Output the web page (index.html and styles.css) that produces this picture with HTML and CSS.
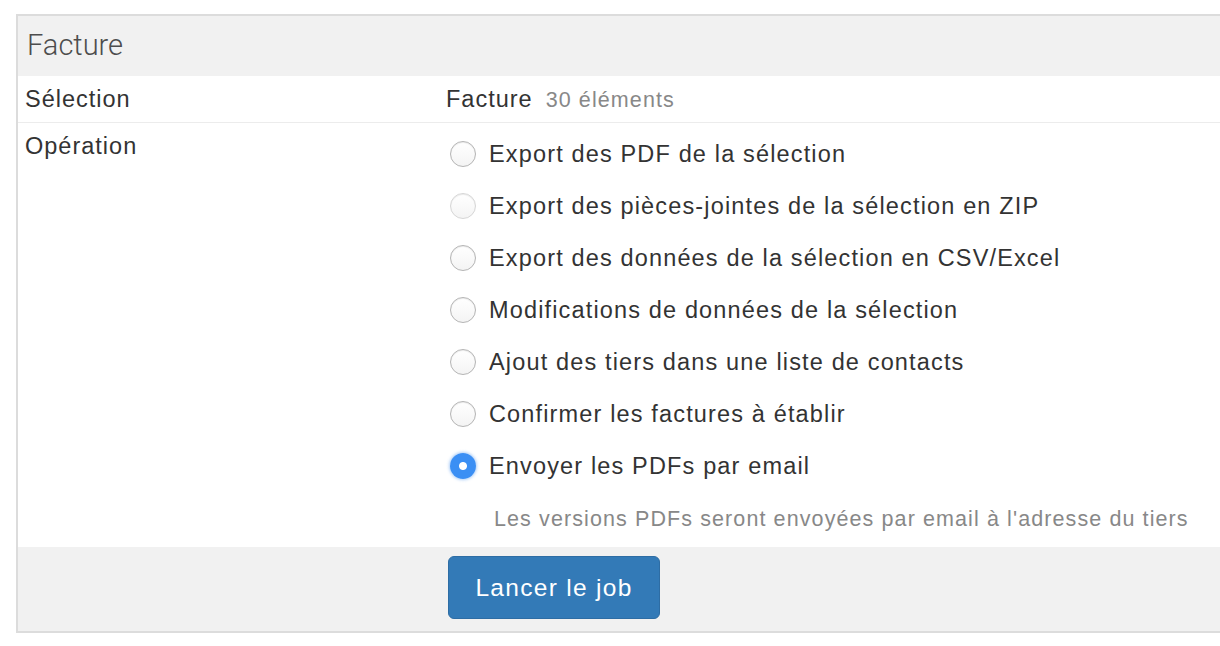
FILE: index.html
```html
<!DOCTYPE html>
<html lang="fr">
<head>
<meta charset="utf-8">
<link rel="stylesheet" href="styles.css">
</head>
<body>
<div class="panel">
  <div class="panel-heading">Facture</div>
  <div class="row row-sel">
    <div class="label">Sélection</div>
    <div class="value"><span class="entity">Facture</span><span class="count">30 éléments</span></div>
  </div>
  <div class="row row-op">
    <div class="label">Opération</div>
    <div class="value">
      <ul class="options">
        <li><span class="radio"></span>Export des PDF de la sélection</li>
        <li><span class="radio faint"></span>Export des pièces-jointes de la sélection en ZIP</li>
        <li><span class="radio"></span>Export des données de la sélection en CSV/Excel</li>
        <li><span class="radio"></span>Modifications de données de la sélection</li>
        <li><span class="radio"></span>Ajout des tiers dans une liste de contacts</li>
        <li><span class="radio"></span>Confirmer les factures à établir</li>
        <li><span class="radio checked"></span>Envoyer les PDFs par email</li>
      </ul>
      <p class="help">Les versions PDFs seront envoyées par email à l'adresse du tiers</p>
    </div>
  </div>
  <div class="panel-footer">
    <button class="btn">Lancer le job</button>
  </div>
</div>
</body>
</html>
```
FILE: styles.css
```css
html, body {
  margin: 0;
  padding: 0;
  background: #fff;
  overflow: hidden;
}
body {
  font-family: "Liberation Sans", Arial, sans-serif;
  color: #333;
}
.panel {
  margin: 14px 0 0 16px;
  width: 1230px;
  border: 2px solid #dcdcdc;
  border-right: none;
}
.panel-heading {
  background: #f1f1f1;
  height: 60px;
  line-height: 58px;
  padding-left: 9px;
  font-family: Roboto, "Liberation Sans", sans-serif;
  font-weight: 300;
  font-size: 29px;
  color: #4d4d4d;
}
.row {
  display: flex;
  border-bottom: 1px solid #ececec;
}
.row-sel {
  height: 46px;
  align-items: center;
}
.label {
  width: 421px;
  padding-left: 7px;
  font-size: 23.5px;
  letter-spacing: 1px;
  color: #333;
}
.row-op .label {
  padding-top: 10px;
}
.entity {
  font-size: 23.5px;
  letter-spacing: 1px;
  color: #333;
  margin-right: 13px;
}
.count {
  font-size: 21.5px;
  letter-spacing: 1.1px;
  color: #888;
}
.row-op {
  border-bottom: none;
  padding-bottom: 15px;
}
.options {
  list-style: none;
  margin: 0;
  padding: 5px 0 0 0;
}
.options li {
  display: flex;
  align-items: center;
  height: 52px;
  font-size: 23.5px;
  letter-spacing: 1.15px;
  color: #333;
}
.radio {
  width: 26px;
  height: 26px;
  border-radius: 50%;
  border: 1px solid #b4b4b4;
  background: linear-gradient(#fff, #f4f4f4);
  box-shadow: inset 0 1px 1px rgba(0,0,0,0.08);
  margin: 0 13px 0 4px;
  box-sizing: border-box;
  flex: none;
}
.radio.faint {
  border-color: #d6d6d6;
}
.radio.checked {
  border: none;
  background: radial-gradient(circle, #fff 0 3.5px, #3b8ff4 4.5px);
  box-shadow: 0 0 3px 1px rgba(80,150,240,0.45);
}
.help {
  margin: 15px 0 0 48px;
  font-size: 21.5px;
  letter-spacing: 1.1px;
  color: #888;
}
.panel-footer {
  background: #f1f1f1;
  height: 84px;
  display: flex;
  align-items: center;
  padding-left: 430px;
}
.btn {
  font-family: "Liberation Sans", Arial, sans-serif;
  font-size: 24.5px;
  letter-spacing: 1.3px;
  color: #fff;
  background: #337ab7;
  border: 1px solid #2e6da4;
  border-radius: 6px;
  width: 212px;
  height: 63px;
  padding: 0;
  margin-top: -3px;
}
```
